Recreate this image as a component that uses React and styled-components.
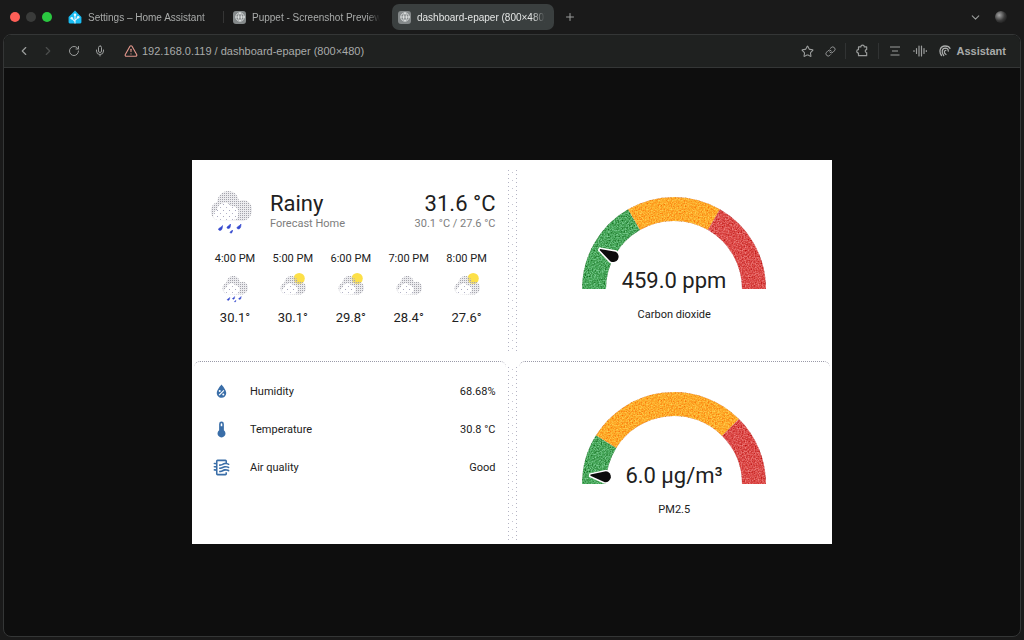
import { useId } from "react";
import styled, { createGlobalStyle } from "styled-components";
import {
  ChevronDown,
  ChevronLeft,
  ChevronRight,
  Globe,
  Link as LinkIcon,
  Mic,
  Plus,
  RotateCw,
  Star,
  TriangleAlert,
} from "lucide-react";

const GlobalStyle = createGlobalStyle`
  * {
    box-sizing: border-box;
  }
  body {
    margin: 0;
    background-color: #1a1a1a;
    color: #a9abaa;
    font-family: "Liberation Sans", Arial, sans-serif;
    font-size: 11px;
  }
  button {
    border: none;
    padding: 0;
    background: transparent;
    color: inherit;
    font: inherit;
  }
`;

const Window = styled.div`
  display: flex;
  flex-direction: column;
  min-height: 100vh;
  padding: 0 3px 3px;
`;

const TabBar = styled.header`
  display: flex;
  align-items: center;
  height: 34px;
  padding: 0 14px 0 7px;
`;

const Lights = styled.div`
  display: flex;
  gap: 6px;
  margin-right: 10px;
`;

const Light = styled.button`
  width: 10px;
  height: 10px;
  border-radius: 50%;
  background-color: ${({ $color }) => $color};
`;

const Tabs = styled.nav`
  display: flex;
  align-items: center;
  gap: 3px;
`;

const Tab = styled.a`
  position: relative;
  display: flex;
  align-items: center;
  gap: 6px;
  width: 162px;
  height: 26px;
  padding: 0 9px 0 6px;
  border-radius: 7px;
  background-color: ${({ $active }) => ($active ? "#3a3f3f" : "transparent")};
  color: ${({ $active }) => ($active ? "#e4e6e5" : "#a9abaa")};
  font-size: 10px;
  text-decoration: none;
  &:first-child::after {
    content: "";
    position: absolute;
    right: 0;
    top: 7px;
    height: 12px;
    border-right: 1px solid #353535;
  }
`;

const TabTitle = styled.span`
  flex: 1;
  overflow: hidden;
  white-space: nowrap;
  mask-image: linear-gradient(to right, #000 90%, transparent);
`;

const Favicon = styled.span`
  display: flex;
  flex: none;
  align-items: center;
  justify-content: center;
  width: 13px;
  height: 13px;
  border-radius: 3px;
  background-color: #84898a;
  color: #e6e8e8;
`;

const IconButton = styled.button`
  display: flex;
  align-items: center;
  justify-content: center;
  width: ${({ $width }) => $width || 24}px;
  height: 24px;
  color: ${({ $color }) => $color || "#9b9d9c"};
`;

const Spacer = styled.div`
  flex: 1;
`;

const Avatar = styled.button`
  width: 12px;
  height: 12px;
  margin-left: 8px;
  border-radius: 50%;
  background: radial-gradient(circle at 35% 35%, #a5a5a5, #3a3a3a 50%, #050505);
`;

const Frame = styled.div`
  display: flex;
  flex: 1;
  flex-direction: column;
  overflow: hidden;
  border: 1px solid #343636;
  border-radius: 8px;
  background-color: #0e0e0e;
`;

const Toolbar = styled.div`
  display: flex;
  align-items: center;
  height: 33px;
  padding: 0 14px 0 8px;
  border-bottom: 1px solid #343636;
  background-color: #1f2120;
`;

const AddressBar = styled.div`
  display: flex;
  flex: 1;
  align-items: center;
  min-width: 0;
  margin-left: 8px;
`;

const Address = styled.input`
  flex: 1;
  min-width: 0;
  border: none;
  padding: 0;
  background: transparent;
  color: #a9abaa;
  font: inherit;
  &:focus {
    outline: none;
  }
`;

const Divider = styled.span`
  width: 1px;
  height: 16px;
  margin: 0 4px;
  background-color: #313333;
`;

const Assistant = styled.button`
  display: flex;
  align-items: center;
  gap: 5px;
  margin-left: 6px;
  font-weight: 600;
`;

const Viewport = styled.main`
  display: flex;
  flex: 1;
  align-items: center;
  justify-content: center;
`;

const Board = styled.div`
  display: grid;
  grid-template-columns: 1fr 9px 1fr;
  grid-template-rows: 201px 183px;
  width: 100%;
  max-width: 640px;
  background-color: #fff;
  color: #212121;
  font-family: Roboto, "Liberation Sans", sans-serif;
`;

const Gutter = styled.div`
  margin: ${({ $last }) => ($last ? "6px 0 2px" : "10px 0 8px")};
  background-image:
    linear-gradient(#b4b4c4 1px, transparent 1px),
    linear-gradient(#b4b4c4 1px, transparent 1px),
    linear-gradient(#c4c4d0 1px, transparent 1px);
  background-position: 0 0, 8px 0, 4px 2px;
  background-size: 1px 4px, 1px 4px, 1px 8px;
  background-repeat: repeat-y;
`;

const Card = styled.section`
  position: relative;
  padding: ${({ $padding }) => $padding};
`;

// rounded, dotted top edge of the lower cards
const LowerCard = styled(Card)`
  &::before {
    content: "";
    position: absolute;
    inset: 0 2px auto;
    height: 8px;
    border-top: 1px dotted #9a9aa8;
    border-radius: 6px 6px 0 0;
  }
`;

const WeatherHeader = styled.div`
  display: flex;
  align-items: center;
  padding-left: 4px;
`;

const Headline = styled.div`
  flex: 1;
  margin-left: 18px;
`;

const Reading = styled.div`
  text-align: right;
`;

const Big = styled.div`
  font-size: 22px;
  line-height: 24px;
`;

const Small = styled.div`
  color: #7d7d7d;
  font-size: 11px;
  line-height: 16px;
`;

const Forecast = styled.ol`
  display: grid;
  grid-template-columns: repeat(5, 1fr);
  margin: 18px 0 0;
  padding: 0;
  list-style: none;
`;

const Hour = styled.li`
  display: flex;
  flex-direction: column;
  align-items: center;
  font-size: 11px;
  line-height: 16px;
  svg {
    margin: 9px 0 5px;
  }
`;

const HourTemp = styled.span`
  margin-top: 3px;
  font-size: 13px;
`;

const Entities = styled.ul`
  margin: 0;
  padding: 0;
  list-style: none;
`;

const Entity = styled.li`
  display: flex;
  align-items: center;
  height: 38px;
  font-size: 11px;
  svg {
    margin-right: 19px;
  }
`;

const EntityName = styled.span`
  flex: 1;
`;

const GaugeBox = styled.figure`
  display: flex;
  flex-direction: column;
  align-items: center;
  margin: 0;
`;

const GaugeLabel = styled.figcaption`
  margin-top: 13px;
  font-size: 11px;
  line-height: 16px;
`;

const HOURS = [
  { time: "4:00 PM", kind: "rain", temp: "30.1°" },
  { time: "5:00 PM", kind: "partly", temp: "30.1°" },
  { time: "6:00 PM", kind: "partly", temp: "29.8°" },
  { time: "7:00 PM", kind: "cloudy", temp: "28.4°" },
  { time: "8:00 PM", kind: "partly", temp: "27.6°" },
];

const ENTITIES = [
  {
    name: "Humidity",
    state: "68.68%",
    path: "M12,3.25C12,3.25 6,10 6,14C6,17.32 8.69,20 12,20A6,6 0 0,0 18,14C18,10 12,3.25 12,3.25M14.47,9.97L15.53,11.03L9.53,17.03L8.47,15.97M9.75,10A1.25,1.25 0 0,1 11,11.25A1.25,1.25 0 0,1 9.75,12.5A1.25,1.25 0 0,1 8.5,11.25A1.25,1.25 0 0,1 9.75,10M14.25,14.5A1.25,1.25 0 0,1 15.5,15.75A1.25,1.25 0 0,1 14.25,17A1.25,1.25 0 0,1 13,15.75A1.25,1.25 0 0,1 14.25,14.5Z",
  },
  {
    name: "Temperature",
    state: "30.8 °C",
    path: "M15 13V5A3 3 0 0 0 9 5V13A5 5 0 1 0 15 13M12 4A1 1 0 0 1 13 5V8H11V5A1 1 0 0 1 12 4Z",
  },
  {
    name: "Air quality",
    state: "Good",
    path: "M19,18.31V20A2,2 0 0,1 17,22H7A2,2 0 0,1 5,20V16.3C4.54,16.12 3.95,16 3,16A1,1 0 0,1 2,15A1,1 0 0,1 3,14C3.82,14 4.47,14.08 5,14.21V12.3C4.54,12.12 3.95,12 3,12A1,1 0 0,1 2,11A1,1 0 0,1 3,10C3.82,10 4.47,10.08 5,10.21V8.3C4.54,8.12 3.95,8 3,8A1,1 0 0,1 2,7A1,1 0 0,1 3,6C3.82,6 4.47,6.08 5,6.21V4A2,2 0 0,1 7,2H17A2,2 0 0,1 19,4V6.16C20.78,6.47 21.54,7.13 21.71,7.29C22.1,7.68 22.1,8.32 21.71,8.71C21.32,9.1 20.8,9.09 20.29,8.71V8.71C20.29,8.71 19.25,8 17,8C15.74,8 14.91,8.41 13.95,8.9C12.91,9.41 11.74,10 10,10C9.64,10 9.31,10 9,9.96V7.95C9.3,8 9.63,8 10,8C11.26,8 12.09,7.59 13.05,7.11C14.09,6.59 15.27,6 17,6V4H7V20H17V18C18.5,18 18.97,18.29 19,18.31M17,10C15.27,10 14.09,10.59 13.05,11.11C12.09,11.59 11.26,12 10,12C9.63,12 9.3,12 9,11.95V13.96C9.31,14 9.64,14 10,14C11.74,14 12.91,13.41 13.95,12.9C14.91,12.42 15.74,12 17,12C19.25,12 20.29,12.71 20.29,12.71V12.71C20.8,13.1 21.32,13.1 21.71,12.71C22.1,12.32 22.1,11.69 21.71,11.29C21.5,11.08 20.25,10 17,10M17,14C15.27,14 14.09,14.59 13.05,15.11C12.09,15.59 11.26,16 10,16C9.63,16 9.3,16 9,15.95V17.96C9.31,18 9.64,18 10,18C11.74,18 12.91,17.41 13.95,16.9C14.91,16.42 15.74,16 17,16C19.25,16 20.29,16.71 20.29,16.71V16.71C20.8,17.1 21.32,17.1 21.71,16.71C22.1,16.32 22.1,15.69 21.71,15.29C21.5,15.08 20.25,14 17,14Z",
  },
];

function WeatherIcon({ kind, size }) {
  const id = useId();
  const px = 42 / size;
  return (
    <svg
      width={size}
      height={size}
      viewBox="0 0 42 42"
      overflow="visible"
      aria-hidden="true"
    >
      <defs>
        <pattern
          id={`${id}dense`}
          width={2 * px}
          height={2 * px}
          patternUnits="userSpaceOnUse"
        >
          <rect width={2 * px} height={2 * px} fill="#c8c8d0" opacity="0.35" />
          <rect width={px} height={px} fill="#a4a4ac" />
        </pattern>
        <pattern
          id={`${id}sparse`}
          width={6 * px}
          height={6 * px}
          patternUnits="userSpaceOnUse"
        >
          <rect width={6 * px} height={6 * px} fill="#fff" />
          <rect x={px} y={px} width={px} height={px} fill="#a8a8c0" />
          <rect x={4 * px} y={4 * px} width={px} height={px} fill="#b4b4c8" />
        </pattern>
      </defs>
      {kind === "partly" && <circle cx="31" cy="4" r="9" fill="#fde047" />}
      <path
        d="M6 29C-1 25 -1 14 7 11C8 4 13 0 18 0C24 0 28 4 29 10C36 7 42 12 42 19C42 25 38 29 33 30Z"
        fill={`url(#${id}dense)`}
      />
      <path
        d="M7 29C2 28 2 21 7 19C8 12 17 9 21 15C27 15 30 20 28 24C28 28 26 29 22 29Z"
        fill={`url(#${id}sparse)`}
      />
      {kind === "rain" && (
        <g fill="#3549cf" stroke="#3549cf" strokeWidth="0.6">
          <path d="M12.500 34.500c-1 2-3.500 2.200-4 3.500c-.3 1.500 2 2 3 .8c.8-1 .9-2.500 1-4.300z" />
          <path d="M20.500 33c-1 1.800-3 2-3.500 3.200c-.3 1.400 1.800 1.800 2.700.8c.7-1 .8-2.300.8-4z" />
          <path d="M31 33c-1 2-3.500 2.200-4 3.500c-.3 1.500 2 2 3 .8c.8-1 .9-2.500 1-4.300z" />
          <path d="M22.500 39c-.8 1.500-2.300 1.300-2.500 2.300c0 1 1.600 1 2 .2c.4-.6.500-1.500.5-2.500z" />
        </g>
      )}
    </svg>
  );
}

function point(angle, radius = 80) {
  const rad = (angle * Math.PI) / 180;
  return `${-radius * Math.cos(rad)} ${-radius * Math.sin(rad)}`;
}

function Gauge({ value, label, stops, needle }) {
  const id = useId();
  const colors = ["#47a85a", "#fdab28", "#dd4a48"];
  const edges = [0, ...stops, 180];
  return (
    <GaugeBox>
      <svg
        width="186"
        height="98"
        viewBox="-93 -93 186 98"
        role="img"
        aria-label={`${label}: ${value}`}
      >
        <filter
          id={id}
          filterUnits="userSpaceOnUse"
          x="-93"
          y="-93"
          width="186"
          height="98"
        >
          <feTurbulence type="fractalNoise" baseFrequency="0.7" numOctaves="2" />
          <feColorMatrix
            type="matrix"
            values="1.600 0 0 0 -0.3  1.600 0 0 0 -0.3  1.600 0 0 0 -0.3  0 0 0 0 1"
          />
          <feComposite operator="in" in2="SourceGraphic" result="grain" />
          <feBlend mode="soft-light" in="grain" in2="SourceGraphic" />
        </filter>
        <g
          fill="none"
          strokeWidth="24"
          filter={`url(#${id})`}
          colorInterpolationFilters="sRGB"
        >
          {colors.map((color, i) => (
            <path
              key={color}
              d={`M${point(edges[i])}A80 80 0 0 1 ${point(edges[i + 1])}`}
              stroke={color}
            />
          ))}
        </g>
        <path
          d="M-84 -0.600L-69 -5.500A5.500 5.500 0 1 1 -69 5.500L-84 0.600Z"
          transform={`rotate(${needle})`}
          fill="#0c0c0c"
          stroke="#fff"
          strokeWidth="3"
          paintOrder="stroke"
        />
        <text x="0" y="-1" textAnchor="middle" fontSize="22" fill="#212121">
          {value}
        </text>
      </svg>
      <GaugeLabel>{label}</GaugeLabel>
    </GaugeBox>
  );
}

function GlobeIcon() {
  return (
    <Favicon>
      <Globe size={10} strokeWidth={2} />
    </Favicon>
  );
}

function BrowserTabs() {
  return (
    <TabBar>
      <Lights>
        <Light $color="#fe5f57" aria-label="Close" />
        <Light $color="#3a3b3a" aria-label="Minimize" />
        <Light $color="#2ac840" aria-label="Zoom" />
      </Lights>
      <Tabs>
        <Tab href="#settings">
          <svg width="14" height="14" viewBox="0 0 24 24" aria-hidden="true">
            <path
              d="M12 1L23 12V21Q23 23 21 23H3Q1 23 1 21V12Z"
              fill="#18bcf2"
            />
            <g fill="none" stroke="#e9f8fd" strokeWidth="1.800">
              <path d="M12 23V9M12 20L6.500 14.500M12 18L17.500 12.500" />
            </g>
            <g fill="#e9f8fd">
              <circle cx="12" cy="8" r="2.200" />
              <circle cx="6.500" cy="14" r="2.200" />
              <circle cx="17.500" cy="12.500" r="2.200" />
            </g>
          </svg>
          <TabTitle>Settings – Home Assistant</TabTitle>
        </Tab>
        <Tab href="#puppet">
          <GlobeIcon />
          <TabTitle>Puppet - Screenshot Preview</TabTitle>
        </Tab>
        <Tab href="#dashboard" $active>
          <GlobeIcon />
          <TabTitle>dashboard-epaper (800×480)</TabTitle>
        </Tab>
      </Tabs>
      <IconButton $width={32} aria-label="New tab">
        <Plus size={12} strokeWidth={2} />
      </IconButton>
      <Spacer />
      <IconButton aria-label="Tab list">
        <ChevronDown size={13} />
      </IconButton>
      <Avatar aria-label="Profile" />
    </TabBar>
  );
}

function BrowserToolbar() {
  return (
    <Toolbar>
      <IconButton aria-label="Back">
        <ChevronLeft size={14} />
      </IconButton>
      <IconButton aria-label="Forward" $color="#4c4e4d">
        <ChevronRight size={14} />
      </IconButton>
      <IconButton aria-label="Reload" $width={28}>
        <RotateCw size={12} />
      </IconButton>
      <IconButton aria-label="Voice">
        <Mic size={12} />
      </IconButton>
      <AddressBar>
        <IconButton aria-label="Not secure" $color="#e0958a" $width={22}>
          <TriangleAlert size={14} />
        </IconButton>
        <Address
          aria-label="Address"
          defaultValue="192.168.0.119 / dashboard-epaper (800×480)"
        />
      </AddressBar>
      <IconButton aria-label="Bookmark">
        <Star size={13} />
      </IconButton>
      <IconButton aria-label="Copy link" $width={22}>
        <LinkIcon size={11} />
      </IconButton>
      <Divider />
      <IconButton aria-label="Extensions">
        <svg
          width="14"
          height="14"
          viewBox="0 0 24 24"
          fill="none"
          stroke="currentColor"
          strokeWidth="2"
          strokeLinejoin="round"
        >
          <path d="M6 5H10A3 3 0 0 1 16 5H20V9.500A2.500 2.500 0 0 0 20 14.500V20H6V15.500A3 3 0 0 1 6 9.500Z" />
        </svg>
      </IconButton>
      <Divider />
      <IconButton aria-label="Reader">
        <svg
          width="12"
          height="12"
          viewBox="0 0 12 12"
          stroke="currentColor"
          strokeWidth="1.200"
        >
          <path d="M1 2H11M3 6H9M1.500 10H10.500" />
        </svg>
      </IconButton>
      <IconButton aria-label="Listen" $width={26}>
        <svg
          width="14"
          height="14"
          viewBox="0 0 14 14"
          stroke="currentColor"
          strokeWidth="1.200"
          strokeLinecap="round"
        >
          <path d="M1 6.500V7.500M3.500 4.500V9.500M6 2V12M8.500 2V12M11 4.500V9.500M13.300 6.500V7.500" />
        </svg>
      </IconButton>
      <Assistant>
        <svg
          width="12"
          height="12"
          viewBox="0 0 12 12"
          fill="none"
          stroke="currentColor"
          strokeWidth="1.300"
          strokeLinecap="round"
          aria-hidden="true"
        >
          <path d="M2.500 10.500C-0.500 6.500 1.200 1 6 1C8.500 1 10.500 2 11 3.500" />
          <path d="M4.700 10.500C2 7.500 3 3.300 6.300 3.200C8.500 3.200 9.500 4.500 9.200 6" />
          <path d="M7 9.500C4.800 8.300 4.800 5.500 6.800 5.300" />
        </svg>
        Assistant
      </Assistant>
    </Toolbar>
  );
}

export default function App() {
  return (
    <Window>
      <GlobalStyle />
      <BrowserTabs />
      <Frame>
        <BrowserToolbar />
        <Viewport>
          <Board>
            <Card $padding="31px 12px 0 14px">
              <WeatherHeader>
                <WeatherIcon kind="rain" size={42} />
                <Headline>
                  <Big>Rainy</Big>
                  <Small>Forecast Home</Small>
                </Headline>
                <Reading>
                  <Big>31.6 °C</Big>
                  <Small>30.1 °C / 27.6 °C</Small>
                </Reading>
              </WeatherHeader>
              <Forecast>
                {HOURS.map(({ time, kind, temp }) => (
                  <Hour key={time}>
                    {time}
                    <WeatherIcon kind={kind} size={26} />
                    <HourTemp>{temp}</HourTemp>
                  </Hour>
                ))}
              </Forecast>
            </Card>
            <Gutter />
            <Card $padding="36px 0 0">
              <Gauge
                value="459.0 ppm"
                label="Carbon dioxide"
                stops={[60, 120]}
                needle={28}
              />
            </Card>
            <LowerCard $padding="11px 12px 0 20px">
              <Entities>
                {ENTITIES.map(({ name, state, path }) => (
                  <Entity key={name}>
                    <svg
                      width="19"
                      height="19"
                      viewBox="0 0 24 24"
                      fill="#3a6ea8"
                      aria-hidden="true"
                    >
                      <path d={path} />
                    </svg>
                    <EntityName>{name}</EntityName>
                    <span>{state}</span>
                  </Entity>
                ))}
              </Entities>
            </LowerCard>
            <Gutter $last />
            <LowerCard $padding="30px 0 0">
              <Gauge
                value="6.0 µg/m³"
                label="PM2.5"
                stops={[32, 135]}
                needle={6}
              />
            </LowerCard>
          </Board>
        </Viewport>
      </Frame>
    </Window>
  );
}
